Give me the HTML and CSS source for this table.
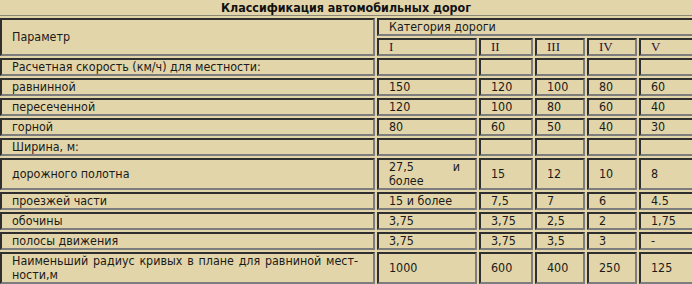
FILE: index.html
```html
<!DOCTYPE html>
<html lang="ru">
<head>
<meta charset="utf-8">
<title>Классификация автомобильных дорог</title>
<link rel="stylesheet" href="styles.css">
</head>
<body>
<div class="page">
  <div class="title">Классификация автомобильных дорог</div>
  <table class="grid">
    <colgroup>
      <col class="c-param">
      <col class="c-1">
      <col class="c-2">
      <col class="c-3">
      <col class="c-4">
      <col class="c-5">
    </colgroup>
    <tr>
      <td rowspan="2">Параметр</td>
      <td colspan="5">Категория дороги</td>
    </tr>
    <tr>
      <td class="rn">I</td>
      <td class="rn">II</td>
      <td class="rn">III</td>
      <td class="rn">IV</td>
      <td class="rn">V</td>
    </tr>
    <tr>
      <td>Расчетная скорость (км/ч) для местности:</td>
      <td>&nbsp;</td><td>&nbsp;</td><td>&nbsp;</td><td>&nbsp;</td><td>&nbsp;</td>
    </tr>
    <tr>
      <td>равнинной</td><td>150</td><td>120</td><td>100</td><td>80</td><td>60</td>
    </tr>
    <tr>
      <td>пересеченной</td><td>120</td><td>100</td><td>80</td><td>60</td><td>40</td>
    </tr>
    <tr>
      <td>горной</td><td>80</td><td>60</td><td>50</td><td>40</td><td>30</td>
    </tr>
    <tr>
      <td>Ширина, м:</td>
      <td>&nbsp;</td><td>&nbsp;</td><td>&nbsp;</td><td>&nbsp;</td><td>&nbsp;</td>
    </tr>
    <tr>
      <td>дорожного полотна</td><td class="just">27,5 и<br>более</td><td>15</td><td>12</td><td>10</td><td>8</td>
    </tr>
    <tr>
      <td>проезжей части</td><td>15 и более</td><td>7,5</td><td>7</td><td>6</td><td>4.5</td>
    </tr>
    <tr>
      <td>обочины</td><td>3,75</td><td>3,75</td><td>2,5</td><td>2</td><td>1,75</td>
    </tr>
    <tr>
      <td>полосы движения</td><td>3,75</td><td>3,75</td><td>3,5</td><td>3</td><td>-</td>
    </tr>
    <tr>
      <td class="just">Наименьший радиус кривых в плане для равниной мест-<br>ности,м</td><td>1000</td><td>600</td><td>400</td><td>250</td><td>125</td>
    </tr>
  </table>
</div>
</body>
</html>
```
FILE: styles.css
```css
html, body {
  margin: 0;
  padding: 0;
  background: #e2d5a9;
}

.page {
  width: 692px;
  height: 284px;
  overflow: hidden;
  font-family: "DejaVu Sans Condensed", "DejaVu Sans", sans-serif;
  font-size: 12.4px;
  color: #1a1a1a;
}

.title {
  height: 15px;
  line-height: 15px;
  text-align: center;
  font-weight: bold;
  color: #111;
  border-bottom: 1px solid #8c8877;
}

.grid {
  table-layout: fixed;
  width: 723px;
  margin-left: -2px;
  border-collapse: separate;
  border-spacing: 2px;
}

.c-param { width: 375px; }
.c-1 { width: 100px; }
.c-2 { width: 54px; }
.c-3 { width: 50px; }
.c-4 { width: 50px; }
.c-5 { width: 80px; }

.grid td {
  box-sizing: border-box;
  border-style: solid;
  border-width: 2px;
  border-color: #2f2f2f #7d7d7d #7d7d7d #2f2f2f;
  padding: 0 15px 0 10px;
  line-height: 14px;
  vertical-align: middle;
  text-align: left;
  white-space: normal;
}

.grid td.rn {
  font-family: "Liberation Serif", serif;
  font-size: 13px;
  color: #2a0d3a;
}

.grid td.just {
  text-align: justify;
  text-align-last: justify;
}
```
